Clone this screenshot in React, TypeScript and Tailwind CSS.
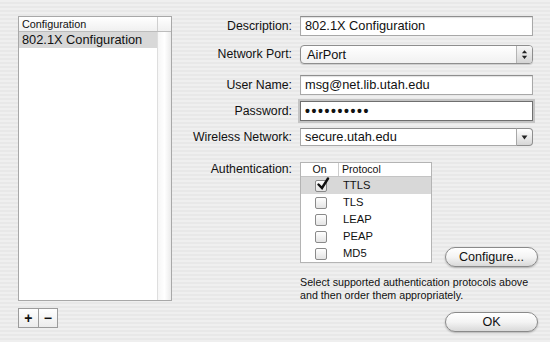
import React from 'react';

const font = "font-['Liberation_Sans',Arial,sans-serif]";

const Field: React.FC<{ children: React.ReactNode; focused?: boolean }> = ({ children, focused }) => (
  <div
    className={
      'w-[233px] h-[20px] bg-white pl-[4px] text-[12.8px] leading-[18px] flex items-center ' +
      (focused
        ? 'border border-[#6f6f6f] shadow-[0_0_0_2px_#c4c4c4]'
        : 'border border-[#a8a8a8] border-t-[#8e8e8e] shadow-[inset_0_1px_1px_rgba(0,0,0,0.12)]')
    }
  >
    {children}
  </div>
);

const Label: React.FC<{ children: React.ReactNode; top?: boolean }> = ({ children, top }) => (
  <div className={'w-[110px] pr-[8px] text-right text-[12.3px] ' + (top ? 'leading-[15px]' : '')}>{children}</div>
);

const Check: React.FC<{ on?: boolean }> = ({ on }) => (
  <div className="relative w-[12px] h-[12px] rounded-[2px] border border-[#8a8a8a] bg-linear-to-b from-white to-[#e4e4e4]">
    {on && (
      <svg viewBox="0 0 14 14" className="absolute -top-[4px] left-0 w-[14px] h-[14px]">
        <path d="M2.5 7.5 L6 11 L12 1.5" fill="none" stroke="#111" strokeWidth="2.4" strokeLinecap="round" />
      </svg>
    )}
  </div>
);

const PillButton: React.FC<{ label: string }> = ({ label }) => (
  <div className="w-[93px] h-[20px] rounded-full border border-[#8a8a8a] bg-linear-to-b from-white via-[#f4f4f4] to-[#d9d9d9] shadow-[0_1px_2px_rgba(0,0,0,0.25)] flex items-center justify-center text-[12.6px] leading-none">
    {label}
  </div>
);

const protocols = ['TTLS', 'TLS', 'LEAP', 'PEAP', 'MD5'];

export default function App() {
  return (
    <div
      className={`w-[550px] h-[342px] flex text-[#111] ${font} bg-[repeating-linear-gradient(180deg,#efefef_0px,#efefef_2px,#e8e8e8_2px,#e8e8e8_4px)]`}
    >
      {/* left list */}
      <div className="ml-[18px] mt-[16px] w-[154px] flex flex-col">
        <div className="h-[285px] border border-[#a8a8a8] bg-white flex flex-col">
          <div className="h-[15px] flex border-b border-[#bcbcbc] bg-linear-to-b from-white to-[#f0f0f0]">
            <div className="flex-1 pl-[3px] text-[10.8px] leading-[14px]">Configuration</div>
            <div className="w-[14px] border-l border-[#cfcfcf]" />
          </div>
          <div className="flex-1 flex">
            <div className="flex-1">
              <div className="h-[16px] bg-[#d8d8d8] pl-[3px] text-[12.8px] leading-[16px]">802.1X Configuration</div>
            </div>
            <div className="w-[14px] border-l border-[#dedede] bg-linear-to-r from-[#f6f6f6] via-white to-[#ebebeb]" />
          </div>
        </div>
        <div className="mt-[7px] w-[40px] h-[20px] flex border border-[#9c9c9c] bg-linear-to-b from-white to-[#ececec] text-[14px] font-bold leading-none">
          <div className="flex-1 flex items-center justify-center">+</div>
          <div className="flex-1 flex items-center justify-center border-l border-[#9c9c9c]">−</div>
        </div>
      </div>

      {/* right form */}
      <div className="ml-[18px] mt-[16px] w-[348px] flex flex-col">
        <div className="flex items-center">
          <Label>Description:</Label>
          <Field>802.1X Configuration</Field>
        </div>

        <div className="mt-[9px] flex items-center">
          <Label>Network Port:</Label>
          <div className="w-[233px] h-[19px] rounded-[4px] border border-[#8e8e8e] bg-linear-to-b from-white to-[#f1f1f1] flex shadow-[0_1px_1px_rgba(0,0,0,0.15)]">
            <div className="flex-1 pl-[6px] text-[12.8px] leading-[17px]">AirPort</div>
            <div className="w-[16px] rounded-r-[3px] border-l border-[#b4b4b4] bg-linear-to-b from-[#f7f7f7] to-[#d4d4d4] flex items-center justify-center">
              <svg viewBox="0 0 8 12" className="w-[7px] h-[11px]">
                <path d="M4 1 L7 4.5 L1 4.5 Z M4 11 L7 7.5 L1 7.5 Z" fill="#222" />
              </svg>
            </div>
          </div>
        </div>

        <div className="mt-[11px] flex items-center">
          <Label>User Name:</Label>
          <Field>msg@net.lib.utah.edu</Field>
        </div>

        <div className="mt-[6px] flex items-center">
          <Label>Password:</Label>
          <Field focused>
            <span className="text-[14px] tracking-[1.6px] font-bold">••••••••••</span>
          </Field>
        </div>

        <div className="mt-[7px] flex items-center">
          <Label>Wireless Network:</Label>
          <div className="w-[233px] h-[18px] flex">
            <div className="flex-1 bg-white border border-[#a8a8a8] border-t-[#8e8e8e] pl-[4px] text-[12.8px] leading-[16px]">
              secure.utah.edu
            </div>
            <div className="w-[16px] rounded-r-[4px] border border-l-0 border-[#8e8e8e] bg-linear-to-b from-white to-[#d6d6d6] flex items-center justify-center">
              <svg viewBox="0 0 8 6" className="w-[7px] h-[5px]">
                <path d="M0.5 0.5 L7.5 0.5 L4 5.5 Z" fill="#222" />
              </svg>
            </div>
          </div>
        </div>

        <div className="mt-[16px] flex items-start">
          <Label top>Authentication:</Label>
          <div className="w-[238px] flex items-start justify-between">
            <div className="w-[132px] h-[101px] border border-[#b4b4b4] bg-white flex flex-col">
              <div className="h-[14px] flex border-b border-[#c4c4c4] text-[10.6px] leading-[13px]">
                <div className="w-[38px] text-center border-r border-[#cdcdcd]">On</div>
                <div className="pl-[3px]">Protocol</div>
              </div>
              {protocols.map((p, i) => (
                <div key={p} className={'h-[17px] flex items-center ' + (i === 0 ? 'bg-[#d8d8d8]' : '')}>
                  <div className="w-[38px] flex justify-center pl-[1px]">
                    <Check on={i === 0} />
                  </div>
                  <div className="pl-[4px] text-[11.2px] leading-none">{p}</div>
                </div>
              ))}
            </div>
            <div className="mt-[85px]">
              <PillButton label="Configure..." />
            </div>
          </div>
        </div>

        <div className="mt-[9px] ml-[110px] text-[10.7px] leading-[13px]">
          Select supported authentication protocols above
          <br />
          and then order them appropriately.
        </div>

        <div className="mt-[10px] ml-[255px]">
          <PillButton label="OK" />
        </div>
      </div>
    </div>
  );
}
